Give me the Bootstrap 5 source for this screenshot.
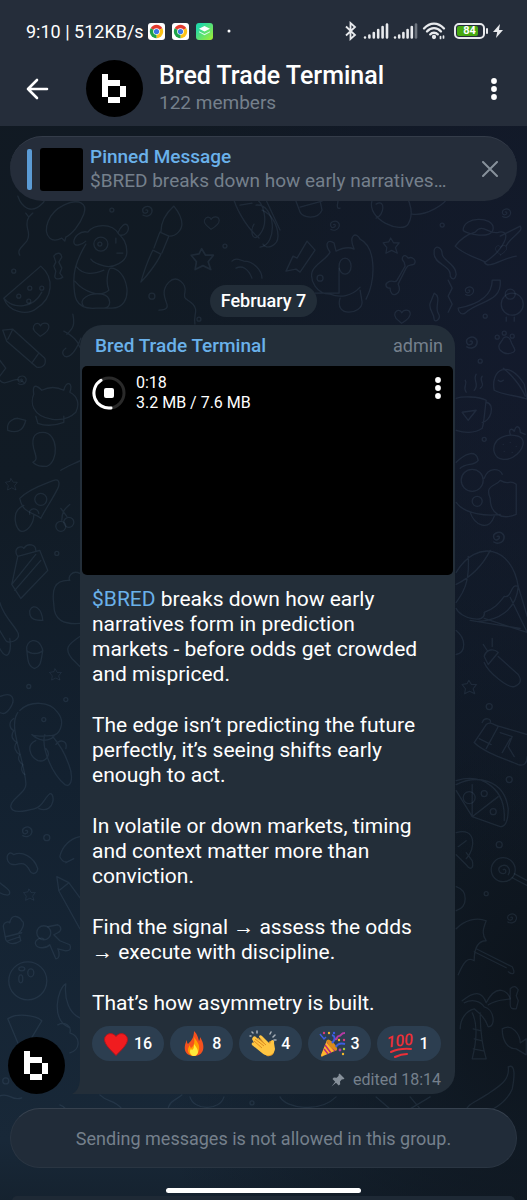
<!DOCTYPE html>
<html lang="en">
<head>
<meta charset="utf-8">
<meta name="viewport" content="width=device-width, initial-scale=1">
<title>Bred Trade Terminal</title>
<link href="https://cdn.jsdelivr.net/npm/bootstrap@5.3.0/dist/css/bootstrap.min.css" rel="stylesheet">
<style>
  :root { --bar: #252d3a; --bubble: #232e39; --blue: #6ab1ea; --muted: #75808c; }
  body {
    font-family: Roboto, "Liberation Sans", sans-serif; font-size: 19px; line-height: 25px; color: #fff;
    background:
      radial-gradient(ellipse 70% 45% at 100% 28%, #131a2c 0%, rgba(19,26,44,0) 100%),
      radial-gradient(ellipse 70% 50% at 100% 82%, #0d141c 0%, rgba(13,20,28,0) 100%),
      linear-gradient(180deg, #111922 0%, #111b25 40%, #132130 65%, #182838 95%, #15222f 100%);
  }
  button { background: none; border: 0; padding: 0; color: inherit; line-height: 0; }
  svg { display: block; flex: none; }
  .app-bar { background: var(--bar); }
  .status { padding: 16px 24px 0 26px; height: 46px; font-size: 18px; }
  .tray { gap: 7px; }
  .battery { position: relative; width: 31px; height: 16px; border: 2px solid #e8eaed; border-radius: 5px; padding: 1px; }
  .battery i { display: block; width: 84%; height: 100%; background: #46a811; border-radius: 2px; }
  .battery b { position: absolute; inset: 0; font-size: 11px; line-height: 12px; text-align: center; }
  .battery::after { content: ""; position: absolute; right: -5px; top: 3px; width: 2px; height: 6px; background: #e8eaed; border-radius: 1px; }
  .title-row { padding: 14px 26px 9px; }
  .chat-title { font-size: 25px; line-height: 28px; font-weight: 500; }
  .dim { color: var(--muted); }
  .accent, .accent:hover { color: var(--blue); text-decoration: none; }
  .avatar { width: 57px; height: 57px; border-radius: 50%; background: #000; flex: none; }
  .back { margin-right: 36px; }
  .wallpaper { position: absolute; inset: 0; width: 100%; height: 100%; }
  .pinned { margin: 10px 10px 0; height: 65px; border-radius: 33px; background: var(--bar); padding: 0 19px 0 17px; border-top: 1px solid #343c49; }
  .pin-mark { width: 5px; height: 41px; border-radius: 2px; background: #5b9bd5; }
  .thumb { width: 43px; height: 43px; border-radius: 3px; background: #000; margin: 0 7px 0 8px; }
  .pinned-text { line-height: 24px; }
  .w-medium { font-weight: 500; }
  .day { margin-top: 84px; height: 32px; border-radius: 16px; background: #222d38; padding: 0 11px; font-size: 18px; line-height: 31px; font-weight: 500; }
  .feed { margin: 8px 72px 14px 8px; gap: 15px; }
  .bubble { background: var(--bubble); border-radius: 22px 22px 22px 0; position: relative; }
  .tail { position: absolute; left: -8px; bottom: 0; }
  .bubble-head { padding: 8px 12px 8px 15px; }
  .role { font-size: 18px; }
  .media { background: #000; border-radius: 5px; margin: 0 2px; height: 209px; padding: 7px 8px 7px 10px; }
  .media-info { font-size: 16px; line-height: 20px; margin-left: 10px; }
  .message { font-size: 21px; padding: 12px 20px 0 12px; }
  .message p { margin-bottom: 26px; }
  .message p:last-child { margin-bottom: 0; }
  .reactions { padding: 10px 12px 0; gap: 6px; }
  .reaction { height: 35px; border-radius: 18px; background: #2c3e50; padding: 0 12px 0 10px; font-size: 16px; font-weight: 500; line-height: 35px; gap: 4px; }
  .reaction svg { margin: 0 1px; overflow: visible; }
  .meta { font-size: 16px; line-height: 20px; padding: 9px 14px 4px; gap: 8px; }
  .notice { margin: 0 10px; height: 60px; border-radius: 30px; font-size: 18px; background: #212c39; border: 1px solid #2a3542; border-top-color: #36414e; }
  .home { width: 195px; height: 5px; border-radius: 3px; background: #fff; margin: 20px auto 3px; }
  .edge { height: 5px; margin: 0 12px; background: #1e2935; border-radius: 5px 5px 0 0; }
</style>
</head>
<body class="min-vh-100 d-flex flex-column">

<svg width="0" height="0" class="position-absolute" aria-hidden="true">
  <defs>
    <symbol id="logo" viewBox="0 0 57 57"><path fill="#fff" d="M16 14h6v6h12v6H22v11h-6zM34 26h6v11h-6zM22 37h12v6H22z"/></symbol>
    <symbol id="chrome" viewBox="0 0 17 17">
      <rect width="17" height="17" rx="3" fill="#fff"/>
      <path fill="#e33b2e" d="M8.500 8.500 2.700 5.200A6.700 6.700 0 0 1 14.300 5.200z"/>
      <path fill="#fbc116" d="M8.500 8.500 14.300 5.200A6.700 6.700 0 0 1 8.500 15.200z"/>
      <path fill="#1fa34a" d="M8.500 8.500V15.200A6.700 6.700 0 0 1 2.700 5.200z"/>
      <circle cx="8.500" cy="8.500" r="3.300" fill="#fff"/><circle cx="8.500" cy="8.500" r="2.600" fill="#3b78e7"/>
    </symbol>
    <symbol id="dots" viewBox="0 0 6 22"><g fill="currentColor"><circle cx="3" cy="3" r="2.900"/><circle cx="3" cy="11" r="2.900"/><circle cx="3" cy="19" r="2.900"/></g></symbol>
    <symbol id="spiral" viewBox="0 0 16 16"><path d="M8 8c2-1 3 2 0 3s-5-4-1-6 8 1 7 5-6 5-9 3"/></symbol>
    <symbol id="star" viewBox="0 0 20 20"><path d="M9 2l3 5 6 0-4 5 2 6-6-3-6 3 1-6-4-5 6-1z"/></symbol>
    <symbol id="heart" viewBox="0 0 20 18"><path d="M9 16C4 12 0 9 2 5s6-3 7 0c2-4 8-4 9 0s-4 8-9 11z"/></symbol>
  </defs>
</svg>

<header class="app-bar">
  <div class="status d-flex justify-content-between">
    <div class="d-flex align-items-center">
      <span>9:10 | 512KB/s</span>
      <div class="d-flex align-items-center tray ms-1">
        <svg width="17" height="17"><use href="#chrome"/></svg>
        <svg width="17" height="17"><use href="#chrome"/></svg>
        <svg width="17" height="17" viewBox="0 0 17 17"><defs><linearGradient id="lime" x1="0" y1="0" x2="1" y2="1"><stop offset=".2" stop-color="#25d9a5"/><stop offset="1" stop-color="#a5ee2e"/></linearGradient></defs><rect width="17" height="17" rx="3" fill="url(#lime)"/><path d="M8.500 3l5.500 2.800-5.500 2.700L3 5.800z" fill="#fff"/><path d="M3 8.200l5.500 2.700L14 8.200v1l-5.500 3L3 9.200z" fill="#d9fbe8"/></svg>
        <svg width="14" height="4" viewBox="0 0 14 4"><circle cx="9" cy="2" r="1.500" fill="#fff"/></svg>
      </div>
    </div>
    <div class="d-flex align-items-center">
      <svg width="14" height="20" viewBox="0 0 14 20" fill="none" stroke="#e8eaed" stroke-width="1.800"><path d="M2 5.500l9 8.500-4.500 4V2L11 6l-9 8.500"/></svg>
      <svg class="ms-1" width="56" height="18" viewBox="0 0 56 18" stroke="#e8eaed" stroke-width="2.600" stroke-linecap="round"><path d="M3 15.500v0M7.400 13.500v2M11.800 11v4.500M16.200 8v7.500M20.600 5v10.500M25 2.500v13M33 15.500v0M37.200 13.500v2M41.400 11v4.500M45.600 8v7.500M49.800 5v10.500"/><path d="M54 2.500v13" stroke="#6e757f"/></svg>
      <svg class="ms-1" width="24" height="20" viewBox="0 0 24 20" fill="none" stroke="#e8eaed" stroke-width="2.300" stroke-linecap="round"><path d="M2 7.500C8 1 16 1 22 7.500M5 10.500c4-4.500 10-4.500 14 0M8.200 13.400c2-2.200 5.500-2.200 7.600 0"/><circle cx="12" cy="16" r="1" fill="#e8eaed"/><path d="M18.500 15.500v2M21.500 15v2" stroke-width="1.700"/></svg>
      <div class="battery ms-2"><i></i><b>84</b></div>
      <svg class="ms-2" width="10" height="14" viewBox="0 0 10 14"><path d="M7 0L0 8h4.200L3 14l7-8H6z" fill="#e8eaed"/></svg>
    </div>
  </div>
  <div class="title-row d-flex align-items-center">
    <button class="back" type="button" aria-label="Back"><svg width="24" height="24" viewBox="0 0 24 24" fill="none" stroke="#fff" stroke-width="2.600" stroke-linecap="round" stroke-linejoin="round"><path d="M21 12H2M11 3L2 12l9 9"/></svg></button>
    <div class="avatar"><svg width="57" height="57"><use href="#logo"/></svg></div>
    <div class="ms-3 flex-grow-1">
      <h1 class="chat-title mb-0">Bred Trade Terminal</h1>
      <div class="dim">122 members</div>
    </div>
    <button type="button" aria-label="More options" class="me-1"><svg width="6" height="22"><use href="#dots"/></svg></button>
  </div>
</header>

<main class="flex-grow-1 d-flex flex-column position-relative">
  <svg class="wallpaper" viewBox="0 126 527 1074" preserveAspectRatio="xMidYMin slice" fill="none" stroke="#7f9db8" stroke-opacity=".13" stroke-width="1.300" stroke-linecap="round" stroke-linejoin="round" aria-hidden="true">
    <!-- top band -->
    <path d="M18 196c4 12 14 18 24 8 4-3 4-8 4-10M26 213l3 4 4-4M29 217c-6 10 4 15-2 24-5 6-10 9-7 14"/>
    <path d="M50 238c-8-8-1-26 14-33s24-2 20 9-12 20-18 23l-1 4-3-3c-4 2-9 3-12 0z"/>
    <path d="M88 232c-8-2-14 5-14 10s8 3 12-1M88 232c6-8 24-10 31 2 4 4 8 8 8 18s-14 16-22 14-12-4-14-7M118 233c2-6 8-12 10-7s-3 10-8 9M86 244c-6 10-12 22-12 36s0 30 22 28h16c12 0 16-10 15-20-2-14-10-20-16-20M76 266c8 10 18 8 28 4M75 281c10 12 26 16 34 9-4-10 0-22 2-22M84 306c-6-6 4-14 18-12 10 2 10 14 2 14"/>
    <circle cx="101" cy="244" r="7"/><circle cx="100" cy="244" r="2"/><path d="M117 253h6M116 238v5"/>
    <path d="M141 282c4-14 9-26 12-32l8 4c-4 9-14 22-20 28zM154 248l6-16 9 4-7 17M161 232c0-10 4-18 13-26 4 5 8 12 8 18s-6 12-12 12"/>
    <path d="M4 298l37-32c14 12 12 32-4 42-10 8-28 4-33-10zM4 298c10 12 30 10 38-6"/><circle cx="19" cy="296" r="2"/><circle cx="30" cy="288" r="2"/><circle cx="42" cy="288" r="2"/><circle cx="29" cy="301" r="2"/>
    <path d="M54 256c3-4 7-4 8 1l-3 5 3 6-2 5 3 4c-4 3-8 2-8-1l1-5-2-5 2-4z"/>
    <path d="M3 330l10-1 32 29c2 6-2 10-8 9L7 341zM13 329l-5 10M39 353l-7 10"/>
    <path d="M73 314c2 10 1 14-6 20M64 331c8 4 14 10 16 16M66 348c-6 4-2 10 3 8s10-12 12-18"/>
    <path d="M195 324c-2-8 4-14-2-20s-10-4-8-12-8-18-16-10-4 16-2 22-6 6-8 6"/>
    <path d="M233 196c2 10 12 30 26 42M252 196c14 6 16 28 8 38s-10-4-6-10M240 205l12-2M256 205c20-2 22 40 4 42"/>
    <path d="M232 261c4-4 8-1 12 0 10 0 18 10 18 17M236 268c6-3 12 0 16 10"/>
    <path d="M262 210c10 4 16 16 16 26s-12 14-15 8M266 200l14 30"/>
    <path d="M286 271l7-15 4 2 10-17 8 9-15 22-4-3zM294 196l6 16c2 6 18 8 22-2l-3-14M300 207l22-6"/>
    <path d="M330 252c-6-8-2-14 4-9l2 8c8-4 14-4 18-2-6-14 2-18 6-10 16 8 16 40 6 60M330 252c-4 8-16 12-18 20s4 22 18 22c10 4 22 2 30-7M339 268v25h-24M340 298c-6 20 22 16 22 4M360 290l2 12"/><ellipse cx="345" cy="266" rx="6" ry="8"/><circle cx="320" cy="278" r="3"/>
    <path d="M404 262c-4-4 0-10 4-4 4-2 9 2 6 6-4 2-6 0-8 4l-8 16c2 4 2 8-2 10-4 2-6-2-6-6-4 0-6-4-2-6 4-3 7 2 9-2l8-14z"/>
    <path d="M434 250c2-6 8-2 8 4s14 10 14 20c-1 6-4 6-6 2 2-10-16-12-16-22zM434 293c8 4 0 14 4 20s-4 10-4 6c0-6-6-10-4-16z"/>
    <path d="M448 280l4 8-4 8 4 8-4 8M458 308c20-4 34-12 34-28h8c2 22-20 20-34 32-4 4-8 0-8-4z"/>
    <path d="M455 246c4-6 12-12 20-14 8-10 14 4 24 0 14-2 4 18-14 30-8-4-22-8-30-16zM463 230c0-14 30-14 30-2s-28 6-30 2M500 236l20-10c4 6-10 10-14 20M484 262c4 8 18-4 32-6"/>
    <path d="M376 204c10-6 8 12 0 14M372 200c-6 20 30 34 36 24s2-22-2-28M340 208c-6 2 0-10-2-12M412 214c14 2 34-10 36-18"/>
    <circle cx="512" cy="304" r="11"/><circle cx="510" cy="294" r="5"/><path d="M506 317v4M514 317v4"/>
    <path d="M500 350c-4-6 2-8 3-12 4-3 7 0 8 4s6 8 2 10-9 2-13-2z"/><circle cx="497" cy="337" r="2"/><circle cx="504" cy="333" r="2"/><circle cx="512" cy="336" r="2"/>
    <!-- left column -->
    <path d="M34 394c-2-12 4-8 8-4 8-4 16-3 22 0 2-10 10-8 6 2 8 4 10 12 6 20-12 12-36 8-42-4-2-4-2-10 0-14zM36 416l2 7c8 3 18 2 26-1v-6M0 380c6 8 14-6 24 2M0 360l6 8-6 8"/>
    <path d="M8 430c-2-10 8-12 10-12l8 2c-2 8-6 14-18 10zM35 452c-4-12-2-20 8-20 16 0 16 30 4 34-6 0-10 0-14-4 4-2 4-4 2-10zM61 470c6-4 12-6 20-10"/>
    <path d="M20 498c10-10 24-14 34-18 6-2 6 4 4 8-6 12-12 20-17 30-6-6-18-4-21-20zM24 505c-14 6-8 26-2 26s12-8 12-16"/><circle cx="41" cy="499" r="6"/><path d="M30 514c-2-6 8-8 9-1"/>
    <circle cx="61" cy="526" r="5"/><circle cx="69" cy="522" r="5"/><path d="M62 520c0-10 4-12 8-16M67 516l-6-8"/>
    <path d="M12 584l6-28 22-6 8 20-27 28zM18 556c-6-8 4-12 6-8 4-6 12-4 12 2M12 584l24-30M15 590l26-30"/>
    <path d="M80 573c-8-4-12 4-10 7-16-1-18 10-16 24 0 16 10 20 26 19M30 610c4-8 12-2 13 10-6 0-14 0-13-10zM0 602c4 14 14 22 18 30s-10 12-12 8L0 630M0 648c8 14 12 4 10-10"/>
    <path d="M27 650c-2-10 12-16 16 0-2 12-2 16-8 18-8-2-7-12-8-18zM27 650c4 4 12 4 16 0M80 636c-12 8-16 12-8 22l8 8"/>
    <path d="M0 696c14-6 16 4 10 12s-8 4-10 4M20 710c10-10 30-10 38 2 8 10 2 24-8 23-4 0-14 2-18-1 6 6 16 8 22 2M18 712c-10 14 6 44 8 70 2 10-16 16-15 24s16 4 24 2 8-8 14-14 8 20-10 14M45 734c-4 14 8 40 20 50 8 4 8-10 4-20-6-16-10-20-16-28M36 740c-10 4-6 16 2 20 8 2 14-6 8-12M56 744c4-6 12-4 10 4"/>
    <path d="M14 718c-6 4-4 10 0 12-4 6 0 10 3 12-4 4-1 10 3 12-3 4 0 8 3 10-2 4-1 8 2 10"/><circle cx="44" cy="719" r="2"/>
    <path d="M8 860c-2-6 2-10 6-6 8-4 20 2 24 14-1 6-6 6-8 2-4-8-8-8-14-6-4 0-6 0-8-4zM60 856c2-10 10-18 20-20M60 856c4 8 8 4 6 6M66 862l8-4"/>
    <path d="M57 876l12 6 11 15M57 876l2 14 21 38M59 890l10-8M0 882c4 4 10 6 10 10s-6 2-10 0"/>
    <path d="M4 928c-2-6 4-8 6-6 2-10 10-6 12-2 4 2 0 10-3 12l2 8c-6 4-12 4-15-1zM6 936l16-4M8 940l12-4"/>
    <circle cx="44" cy="932" r="7"/><path d="M48 926l10-2c4 2 4 6 0 8l-4 2 6 6 10 4c2 4 0 6-4 6l-8-2c2 4 2 10-2 10l-6-14c-4 4-12 4-14 0s4-8 8-6"/>
    <circle cx="28" cy="980" r="19"/><ellipse cx="22" cy="968" rx="3" ry="2"/><ellipse cx="31" cy="972" rx="3" ry="4"/><ellipse cx="21" cy="978" rx="2" ry="4"/>
    <path d="M66 983c-8 4-16 36 4 44M66 983c-2 16 4 30 14 34M8 1018c8-6 28-4 34 2l-12 20M8 1018l10 24M58 1024c8-4 14 2 12 8 12 4 10 18 0 20M0 1095c10-4 12 6 22 2M60 1104c10 4 10 14 0 18"/>
    <!-- right column -->
    <path d="M456 398c6-2 22-2 30 2-2 14-2 22-4 28-8 6-20 4-26 2M486 402c10 2 4 20-4 20M462 412l14-2-8 10zM466 392c-4-6 2-8-1-12M474 390c6-6-2-10 2-16M480 388c6-4-2-8 2-12"/>
    <path d="M494 390c-4-20 14-32 30-6l3 15c-10-4-24-4-33-9zM503 368c8 6 18 18 22 28M498 380c2 2 4 1 5 0"/>
    <path d="M497 440c10-8 26-6 26 2s-10 18-20 17-12-12-6-19zM510 434c-2-6 2-6 4-3 2-8 6-4 6 1l5 2"/><path d="M503 444v0M510 442v0M516 446v0M504 451v0M512 452v0"/>
    <circle cx="472" cy="480" r="11"/><path d="M456 462c8-8 20-14 22-2-4 6-12 2-18 8M484 478c4-12 16-10 18-4M490 498c-6-14 6-12 10-18 10 6 8-2 16 4v30c-14 6-26 0-26-16zM470 512c4 12 18 20 24 4M456 502c8 12 32 14 44 12"/><circle cx="477" cy="501" r="5"/>
    <path d="M456 572c20-34 56-26 62 14-8-4-6 12-14 10-6 8-10 12-20 16 2 12-24 6-28-4M468 556c2 30-8 40-12 46M456 584c16-8 26-18 34-34M518 586l9 30M510 597l17 35M484 618l43 14M470 620l50 8M518 586c-2 24-20 34-40 35"/>
    <path d="M484 656c2-8 10-8 14-4l-10 12zM456 630c10 8 10 22 0 24M484 662c4 10 24 26 30 24s8-6 4-12l-20-18M492 638v8M483 644l4 6"/>
    <path d="M474 742l12-18c6-4 8 2 14 2l27 8M474 742c10 10 30 16 44 22 6 2 9-2 9-8M486 748l12-22M479 738l12 6M482 722c2-6 10-4 8 0M500 732l12 4-4 10 6 10M502 752l8-14"/>
    <path d="M456 784c20-10 48-6 52 24 0 14-4 18-8 18l-28-10-16-26M472 816V784M472 816l26-20M456 780c26-8 50 8 48 40"/><circle cx="469" cy="797" r="6"/><circle cx="484" cy="793" r="3"/><circle cx="493" cy="811" r="3"/>
    <path d="M456 832c20-6 20 16 10 26M456 854l10 10c4 6 8 4 6-4l-6-8M458 846l8-6"/>
    <circle cx="503" cy="869" r="12"/><path d="M512 877l15 8M514 873l13 7M503 869c3-2 4 4 0 4s-7-6-1-8 9 5 6 9"/><path d="M456 886c12 4 12 20 0 24"/>
    <path d="M456 928c8-8 20-12 30-8-4 10-4 14 0 20-8 0-12 6-12 20-6-4-10 0-16 14M476 948l36 18c4 8 0 8-4 5M474 951l32 16"/>
    <path d="M462 1000c12-10 20-10 24 2 10-20 22-12 24-4-8 2-12 0-22 6M464 1002c8-4 16-2 20 4 10 2 12 20 4 20-4-12-10-14-14-18-8 2-14 10-14 20M472 1012c6 12 4 30 0 46h14c-6-20-6-36-6-46M473 1028l8 2M474 1038l8 2M473 1048l10 2"/>
    <path d="M510 988c4-4 6-2 8 1l-2 6 2 5-2 8c-4 0-6 0-6-4zM502 1028c10-6 18 6 18 14l6-4v16l-10-6c-10 0-14-10-14-20zM508 1066c8-4 6 12 4 22-6 14-20 22-34 26M508 1066c2 14-10 20-22 28s-20 10-20 16"/>
    <path d="M100 1094c8 8 14 4 22 14s12 10 16 6M168 1110c0-10 10-12 14-16M190 1096c4 14 30 14 34 0M280 1096c6 12 40 16 56 0M376 1096l14 12 30 0-10-12M430 1096l-20 12"/>
    <!-- small fillers -->
    <g>
      <use href="#spiral" x="138" y="202" width="16" height="16"/><use href="#spiral" x="326" y="217" width="15" height="15"/><use href="#spiral" x="498" y="205" width="14" height="14"/><use href="#spiral" x="461" y="283" width="14" height="14"/><use href="#spiral" x="461" y="332" width="18" height="18"/><use href="#spiral" x="14" y="372" width="14" height="14"/><use href="#spiral" x="488" y="527" width="18" height="18"/><use href="#spiral" x="18" y="822" width="16" height="16"/><use href="#spiral" x="503" y="909" width="15" height="15"/>
      <use href="#star" x="190" y="246" width="26" height="26"/><use href="#star" x="382" y="236" width="19" height="19"/><use href="#star" x="5" y="477" width="14" height="14"/><use href="#star" x="49" y="667" width="14" height="14"/><use href="#star" x="461" y="678" width="17" height="17"/><use href="#star" x="23" y="887" width="14" height="14"/>
      <use href="#heart" x="203" y="215" width="18" height="16"/><use href="#heart" x="32" y="321" width="19" height="17"/><use href="#heart" x="393" y="308" width="19" height="17"/><use href="#heart" x="494" y="244" width="14" height="12"/>
      <circle cx="152" cy="296" r="3"/><circle cx="225" cy="246" r="2"/><circle cx="112" cy="210" r="2"/><circle cx="14" cy="271" r="2"/><circle cx="199" cy="319" r="2"/><circle cx="442" cy="225" r="2"/><circle cx="485" cy="316" r="2"/><circle cx="480" cy="361" r="2"/><circle cx="484" cy="439" r="2"/><circle cx="57" cy="553" r="2"/><circle cx="29" cy="686" r="2"/><circle cx="66" cy="699" r="2"/><circle cx="47" cy="837" r="3"/><circle cx="489" cy="706" r="3"/><circle cx="509" cy="779" r="3"/><circle cx="499" cy="844" r="3"/><circle cx="486" cy="893" r="2"/><circle cx="6" cy="1080" r="3"/><circle cx="252" cy="1102" r="2"/>
    </g>
  </svg>

  <section class="pinned d-flex align-items-center position-relative">
    <div class="pin-mark"></div>
    <div class="thumb"></div>
    <div class="pinned-text flex-grow-1 overflow-hidden">
      <div class="accent w-medium">Pinned Message</div>
      <div class="dim text-truncate">$BRED breaks down how early narratives…</div>
    </div>
    <button type="button" aria-label="Unpin" class="ms-3"><svg width="16" height="16" viewBox="0 0 16 16" stroke="#87919b" stroke-width="2" stroke-linecap="round"><path d="M1 1l14 14M15 1L1 15"/></svg></button>
  </section>

  <div class="day align-self-center position-relative">February 7</div>

  <div class="feed d-flex align-items-end position-relative">
    <div class="avatar"><svg width="57" height="57"><use href="#logo"/></svg></div>
    <article class="bubble flex-grow-1">
      <svg class="tail" width="8" height="14" viewBox="0 0 8 14"><path d="M8 0v14H0q7-3 8-14z" fill="#232e39"/></svg>
      <div class="bubble-head d-flex justify-content-between">
        <a class="accent w-medium" href="#">Bred Trade Terminal</a><span class="dim role">admin</span>
      </div>
      <div class="media d-flex align-items-start">
        <button type="button" aria-label="Stop download"><svg width="34" height="40" viewBox="0 0 34 40" fill="none" stroke-width="3" stroke-linecap="round"><circle cx="17" cy="20" r="15" stroke="#2a2a2a"/><path d="M9 7.300A15 15 0 0 0 19 34.900" stroke="#fff"/><rect x="12" y="15" width="10" height="10" rx="2" fill="#fff"/></svg></button>
        <div class="media-info flex-grow-1">0:18<br>3.2 MB / 7.6 MB</div>
        <button type="button" aria-label="Media options" class="mt-1 me-1"><svg width="6" height="22"><use href="#dots"/></svg></button>
      </div>
      <div class="message">
        <p><a class="accent" href="#">$BRED</a> breaks down how early narratives form in prediction markets - before odds get crowded and mispriced.</p>
        <p>The edge isn’t predicting the future perfectly, it’s seeing shifts early enough to act.</p>
        <p>In volatile or down markets, timing and context matter more than conviction.</p>
        <p>Find the signal → assess the odds → execute with discipline.</p>
        <p>That’s how asymmetry is built.</p>
      </div>
      <div class="reactions d-flex flex-wrap">
        <button type="button" class="reaction d-flex align-items-center"><svg width="26" height="26" viewBox="0 0 26 26"><path d="M13 24.500C9 20 1.500 14 1.500 8.500S9 0 13 5.500C17 0 24.500 3 24.500 8.500S17 20 13 24.500z" fill="#f01c1f" stroke="#b3151c"/></svg>16</button>
        <button type="button" class="reaction d-flex align-items-center"><svg width="26" height="26" viewBox="0 0 26 26"><path d="M13 0c4 4 4 7 5 10 1-1 1-3 1-4 6 9 4 19-6 19S2 16 6 9c0 2 0 3 1 4 3-3 6-6 6-13z" fill="#f4511e"/><path d="M13 6c3 5 6 7 5 13-1 4-3 6-5 6s-6-2-6-6c0-2 1-4 2-5 0 1 0 2 1 3 3-2 4-6 3-11z" fill="#ffa000"/><path d="M13 13c2 3 4 5 4 8 0 2-2 4-4 4s-4-2-4-4c0-1 0-2 1-3l1 1c2-1 2-3 2-6z" fill="#ffea3b"/></svg>8</button>
        <button type="button" class="reaction d-flex align-items-center"><svg width="26" height="26" viewBox="0 0 26 26"><path d="M10 8l8 7 1-4c1-2 3-1 3 1l2 7c1 4-3 7-7 6L8 18z" fill="#e89a25"/><path d="M3 6c2-2 3 0 4 1l8 6-6-7c0-2 2-2 3-1l8 8 1-3c1-2 4-1 3 2l1 6c-1 7-9 8-13 4L2 14c-1-2 1-3 2-2l-2-4z" fill="#ffc542"/><path d="M4 10l8 7M5 8l9 7M8 7l8 7" stroke="#df8b21" fill="none"/><path d="M3 2L2 1M7 2V0M1 5h-1M20 3l1-2M23 6l2-2M24 9h2" stroke="#a8b0b8" stroke-width="1.500" stroke-linecap="round"/></svg>4</button>
        <button type="button" class="reaction d-flex align-items-center"><svg width="26" height="26" viewBox="0 0 26 26" fill="none"><path d="M8 9L2 24c0 2 1 2 2 1l14-6z" fill="#ffb52b"/><path d="M6 14l6 8M5 18l4 5M8 11l8 9" stroke="#bd2b78" stroke-width="1.500"/><ellipse cx="13" cy="14" rx="2.600" ry="7" transform="rotate(-43 13 14)" fill="#d98c1b"/><path d="M13 12c4-4 3-7 0-8M17 16c2-4 5-4 9-3" stroke="#3b5de0" stroke-width="2"/><path d="M16 8c3 1 1-3 4-3s1-3 6-3" stroke="#b43aa3" stroke-width="2"/><path d="M1 3l4 5 2-2" stroke="#3b5de0" stroke-width="1.500"/><g><circle cx="5" cy="2" r="1.200" fill="#d93c7a"/><circle cx="10" cy="2" r="1.200" fill="#f7b92c"/><circle cx="15" cy="2" r="1.200" fill="#3b5de0"/><circle cx="25" cy="9" r="1.200" fill="#d93c7a"/><circle cx="21" cy="19" r="1.400" fill="#b43aa3"/><circle cx="25" cy="18" r="1.200" fill="#a9c93c"/><circle cx="24" cy="23" r="1.200" fill="#f7b92c"/><circle cx="20" cy="9" r="1.200" fill="#f7b92c"/></g></svg>3</button>
        <button type="button" class="reaction d-flex align-items-center"><svg width="26" height="28" viewBox="0 0 26 28"><text x="-1" y="16" transform="rotate(-6 13 14)" font-family="Roboto, sans-serif" font-size="16" font-style="italic" font-weight="500" fill="#ee2f37">100</text><path d="M3 22q9-4 20-3M7 27q6-3 12-3" fill="none" stroke="#ee2f37" stroke-width="2" stroke-linecap="round"/></svg>1</button>
      </div>
      <div class="meta dim d-flex align-items-center justify-content-end">
        <svg width="14" height="14" viewBox="0 0 14 14"><path d="M8.500.5l5 5-1.500 1-1-.2-2 2.200.2 2.700-1.500 1.300-2.700-2.700L.5 13.500l3.700-4.700L1.500 6l1.300-1.500 2.900.2 2-2-.2-1z" fill="#87919b"/></svg>
        <span>edited 18:14</span>
      </div>
    </article>
  </div>

  <div class="mt-auto position-relative">
    <div class="notice dim d-flex align-items-center justify-content-center">Sending messages is not allowed in this group.</div>
    <div class="home"></div>
    <div class="edge"></div>
  </div>
</main>

<script src="https://cdn.jsdelivr.net/npm/bootstrap@5.3.0/dist/js/bootstrap.bundle.min.js"></script>
</body>
</html>
